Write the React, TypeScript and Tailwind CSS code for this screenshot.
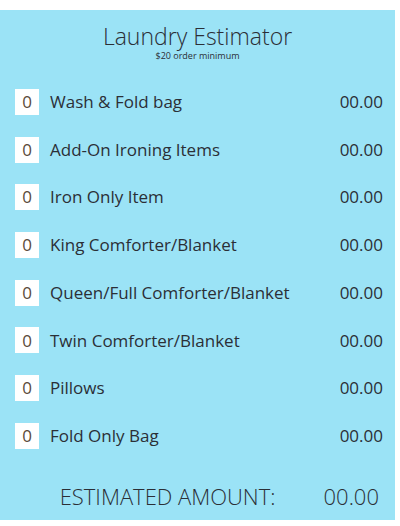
const items = [
  "Wash & Fold bag",
  "Add-On Ironing Items",
  "Iron Only Item",
  "King Comforter/Blanket",
  "Queen/Full Comforter/Blanket",
  "Twin Comforter/Blanket",
  "Pillows",
  "Fold Only Bag",
];

export default function App() {
  return (
    <div className="pt-[10px] bg-white" style={{ fontFamily: "'Open Sans', 'Liberation Sans', sans-serif" }}>
      <div className="w-[395px] h-[510px] bg-[#9be3f6] text-[#2b2f36] flex flex-col">
        <div className="flex flex-col items-center pt-[14px]">
          <h1 className="text-[23px] font-light leading-[24px]">Laundry Estimator</h1>
          <p className="text-[9px] leading-[10px] mt-[3px]">$20 order minimum</p>
        </div>

        <div className="flex flex-col pt-[17px]">
          {items.map((item) => (
            <div key={item} className="flex items-center h-[47.7px] pl-[15px] pr-[12px]">
              <div className="w-[24px] h-[26px] bg-white flex items-center justify-center text-[17px] text-[#5a4a3a]">
                0
              </div>
              <span className="ml-[11px] text-[17px] flex-1">{item}</span>
              <span className="text-[17px]">00.00</span>
            </div>
          ))}
        </div>

        <div className="flex items-center justify-end pr-[16px] mt-[20px] gap-[48px]">
          <span className="text-[22px] font-light">ESTIMATED AMOUNT:</span>
          <span className="text-[22px] font-light">00.00</span>
        </div>
      </div>
    </div>
  );
}
